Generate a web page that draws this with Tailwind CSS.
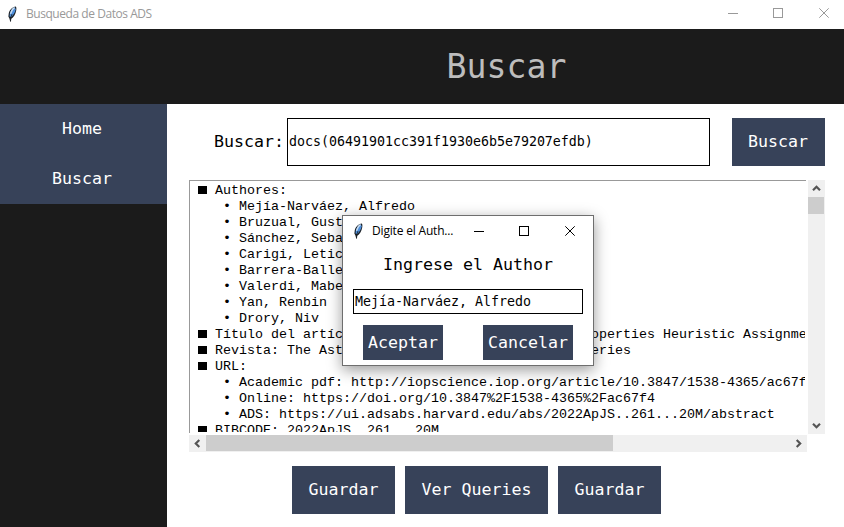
<!DOCTYPE html>
<html lang="es">
<head>
<meta charset="utf-8">
<title>Busqueda de Datos ADS</title>
<script src="https://cdn.jsdelivr.net/npm/@tailwindcss/browser@4"></script>
</head>
<body class="relative flex h-[527px] w-[844px] flex-col overflow-hidden bg-white font-['DejaVu_Sans_Mono',monospace] text-black">
<svg class="hidden">
  <symbol id="feather" viewBox="0 0 9 16">
    <path d="M7.600.4C5 .8 1.700 3.300.8 7L.4 10.500 1.500 12.800 2.200 15.800 3 15.600 3.200 12.800C5.600 11.500 7.700 8 8.200 4.500 8.500 2.500 8.500 1 7.600.4Z" fill="#1c2126"/>
    <path d="M6.800 1.200C4.500 2.300 2.500 4.800 1.900 7.500L1.500 10.600 3.200 10.900C5.200 9.500 7.100 6.500 7.600 3.200Z" fill="#4d8edb"/>
    <path d="M6.600 1.600C5 2.500 3.200 5 2.500 7.800" fill="none" stroke="#c6dcf2" stroke-width="1.300"/>
    <path d="M4 8C3.300 9.500 2.800 11.500 2.600 13.500" fill="none" stroke="#1c2126" stroke-width=".8"/>
  </symbol>
  <symbol id="chev" viewBox="0 0 9 7">
    <path d="M1 5.300L4.500 1.800 8 5.300" fill="none" stroke="#555" stroke-width="2.200"/>
  </symbol>
</svg>

<div class="flex h-[29px] shrink-0 items-center pl-2 pr-[15px] pb-[2px] font-['Open_Sans',sans-serif] text-[12px] text-[#999]">
  <svg class="h-4 w-[9px]"><use href="#feather"/></svg>
  <span class="ml-[9px] w-[128px] whitespace-nowrap tracking-[-0.45px]">Busqueda de Datos ADS</span>
  <div class="ml-auto flex items-center gap-[35px]">
    <svg class="h-[11px] w-[10px]" shape-rendering="crispEdges"><path d="M0 5.500H10" stroke="#999"/></svg>
    <svg class="h-[11px] w-[10px] overflow-visible" shape-rendering="crispEdges"><rect x=".5" y=".5" width="9" height="9" fill="none" stroke="#999"/></svg>
    <svg class="ml-[1px] h-[11px] w-[10px]"><path d="M.3.3L9.700 9.700M9.700.3L.3 9.700" stroke="#999"/></svg>
  </div>
</div>

<header class="flex h-[75px] shrink-0 items-center justify-center bg-[#1b1b1b] pl-[169px]">
  <h1 class="whitespace-nowrap text-[33.2px] leading-none text-[#bdbdbd]">Buscar</h1>
</header>

<div class="flex min-h-0 flex-1">
  <nav class="w-[167px] shrink-0 bg-[#1b1b1b] text-[16.6px] text-white">
    <div class="flex h-[50px] items-center justify-center bg-[#374259] pr-[3px]">Home</div>
    <div class="flex h-[50px] items-center justify-center bg-[#374259] pr-[3px]">Buscar</div>
  </nav>

  <main class="flex flex-1 flex-col pt-[14px] pl-[22px]">
    <div class="flex h-[48px] items-center">
      <span class="w-[98px] whitespace-nowrap pl-[25px] text-[16.6px]">Buscar:</span>
      <div class="flex h-full w-[423px] items-center border border-black pl-[1px] text-[13.29px]">docs(06491901cc391f1930e6b5e79207efdb)</div>
      <div class="ml-[22px] flex h-full w-[93px] items-center justify-center bg-[#374259] pr-[1px] text-[16.6px] text-white">Buscar</div>
    </div>

    <div class="mt-[14px] flex h-[254px]">
      <div class="h-[253px] w-[617px] overflow-hidden border-t border-l border-[#999] pt-[2px] pl-[1px] font-['Liberation_Mono',monospace] text-[13.333px] leading-4">
        <div class="h-[249px] w-[614px] overflow-hidden whitespace-pre"><div><i class="ml-[7px] mr-2 inline-block h-2 w-[9px] bg-black"></i>Authores:</div><div>    • Mejía-Narváez, Alfredo</div><div>    • Bruzual, Gustavo</div><div>    • Sánchez, Sebastián F.</div><div>    • Carigi, Leticia</div><div>    • Barrera-Ballesteros, J. K.</div><div>    • Valerdi, Mabel</div><div>    • Yan, Renbin</div><div>    • Drory, Niv</div><div><i class="ml-[7px] mr-2 inline-block h-2 w-[9px] bg-black"></i>Título del artículo: Simulated Stellar Synth Properties Heuristic Assignment</div><div><i class="ml-[7px] mr-2 inline-block h-2 w-[9px] bg-black"></i>Revista: The Astrophysical Journal Supplement Series</div><div><i class="ml-[7px] mr-2 inline-block h-2 w-[9px] bg-black"></i>URL:</div><div>    • Academic pdf: http://iopscience.iop.org/article/10.3847/1538-4365/ac67f4</div><div>    • Online: https://doi.org/10.3847%2F1538-4365%2Fac67f4</div><div>    • ADS: https://ui.adsabs.harvard.edu/abs/2022ApJS..261...20M/abstract</div><div><i class="ml-[7px] mr-2 inline-block h-2 w-[9px] bg-black"></i>BIBCODE: 2022ApJS..261...20M</div></div>
      </div>
      <div class="ml-[2px] flex w-[17px] flex-col items-center bg-[#f0f0f0]">
        <svg class="mt-[5px] mb-[5px] h-[7px] w-[9px] shrink-0"><use href="#chev"/></svg>
        <div class="h-[17px] w-4 shrink-0 self-start bg-[#cdcdcd]"></div>
        <svg class="mt-auto mb-[5px] h-[7px] w-[9px] rotate-180"><use href="#chev"/></svg>
      </div>
    </div>

    <div class="mt-[1px] flex h-[17px] w-[618px] items-center bg-[#f0f0f0]">
      <svg class="mx-1 h-[7px] w-[9px] shrink-0 -rotate-90"><use href="#chev"/></svg>
      <div class="h-4 w-[407px] self-start bg-[#cdcdcd]"></div>
      <svg class="ml-auto mr-1 h-[7px] w-[9px] rotate-90"><use href="#chev"/></svg>
    </div>

    <div class="mt-[14px] ml-[103px] flex h-[48px] gap-[10px] text-[16.6px] text-white">
      <div class="flex w-[103px] items-center justify-center bg-[#374259]">Guardar</div>
      <div class="flex w-[143px] items-center justify-center bg-[#374259]">Ver Queries</div>
      <div class="flex w-[103px] items-center justify-center bg-[#374259]">Guardar</div>
    </div>
  </main>
</div>

<!-- Author dialog floating over the results -->
<div class="absolute top-[215px] left-[342px] flex h-[151px] w-[252px] flex-col border border-[#6e6e6e] bg-white shadow-[0_4px_14px_rgba(0,0,0,0.4)]">
  <div class="flex h-[29px] items-center pl-[11px] pr-[18px] font-['Open_Sans',sans-serif] text-[12px]">
    <svg class="h-4 w-[9px] shrink-0"><use href="#feather"/></svg>
    <span class="ml-[9px] whitespace-nowrap tracking-[-0.18px]">Digite el Auth...</span>
    <div class="ml-auto flex items-center gap-[35px]">
      <svg class="h-[10px] w-[10px]" shape-rendering="crispEdges"><path d="M0 5.500H10" stroke="#000"/></svg>
      <svg class="h-[10px] w-[10px]" shape-rendering="geometricPrecision"><rect x=".5" y=".5" width="9" height="9" fill="none" stroke="#000"/></svg>
      <svg class="ml-[1px] h-[10px] w-[10px]"><path d="M.3.3L9.700 9.700M9.700.3L.3 9.700" stroke="#000"/></svg>
    </div>
  </div>
  <div class="mt-[8px] flex h-6 items-center justify-center whitespace-nowrap text-[16.6px]">Ingrese el Author</div>
  <div class="mx-[10px] mt-[12px] flex h-[25px] items-center border border-black pl-[1px] text-[13.29px]">Mejía-Narváez, Alfredo</div>
  <div class="mt-[11px] ml-5 flex h-[35px] gap-10 text-[16.6px] text-white">
    <div class="flex w-20 items-center justify-center bg-[#374259] pt-px">Aceptar</div>
    <div class="flex w-[90px] items-center justify-center bg-[#374259] pt-px">Cancelar</div>
  </div>
</div>
</body>
</html>
